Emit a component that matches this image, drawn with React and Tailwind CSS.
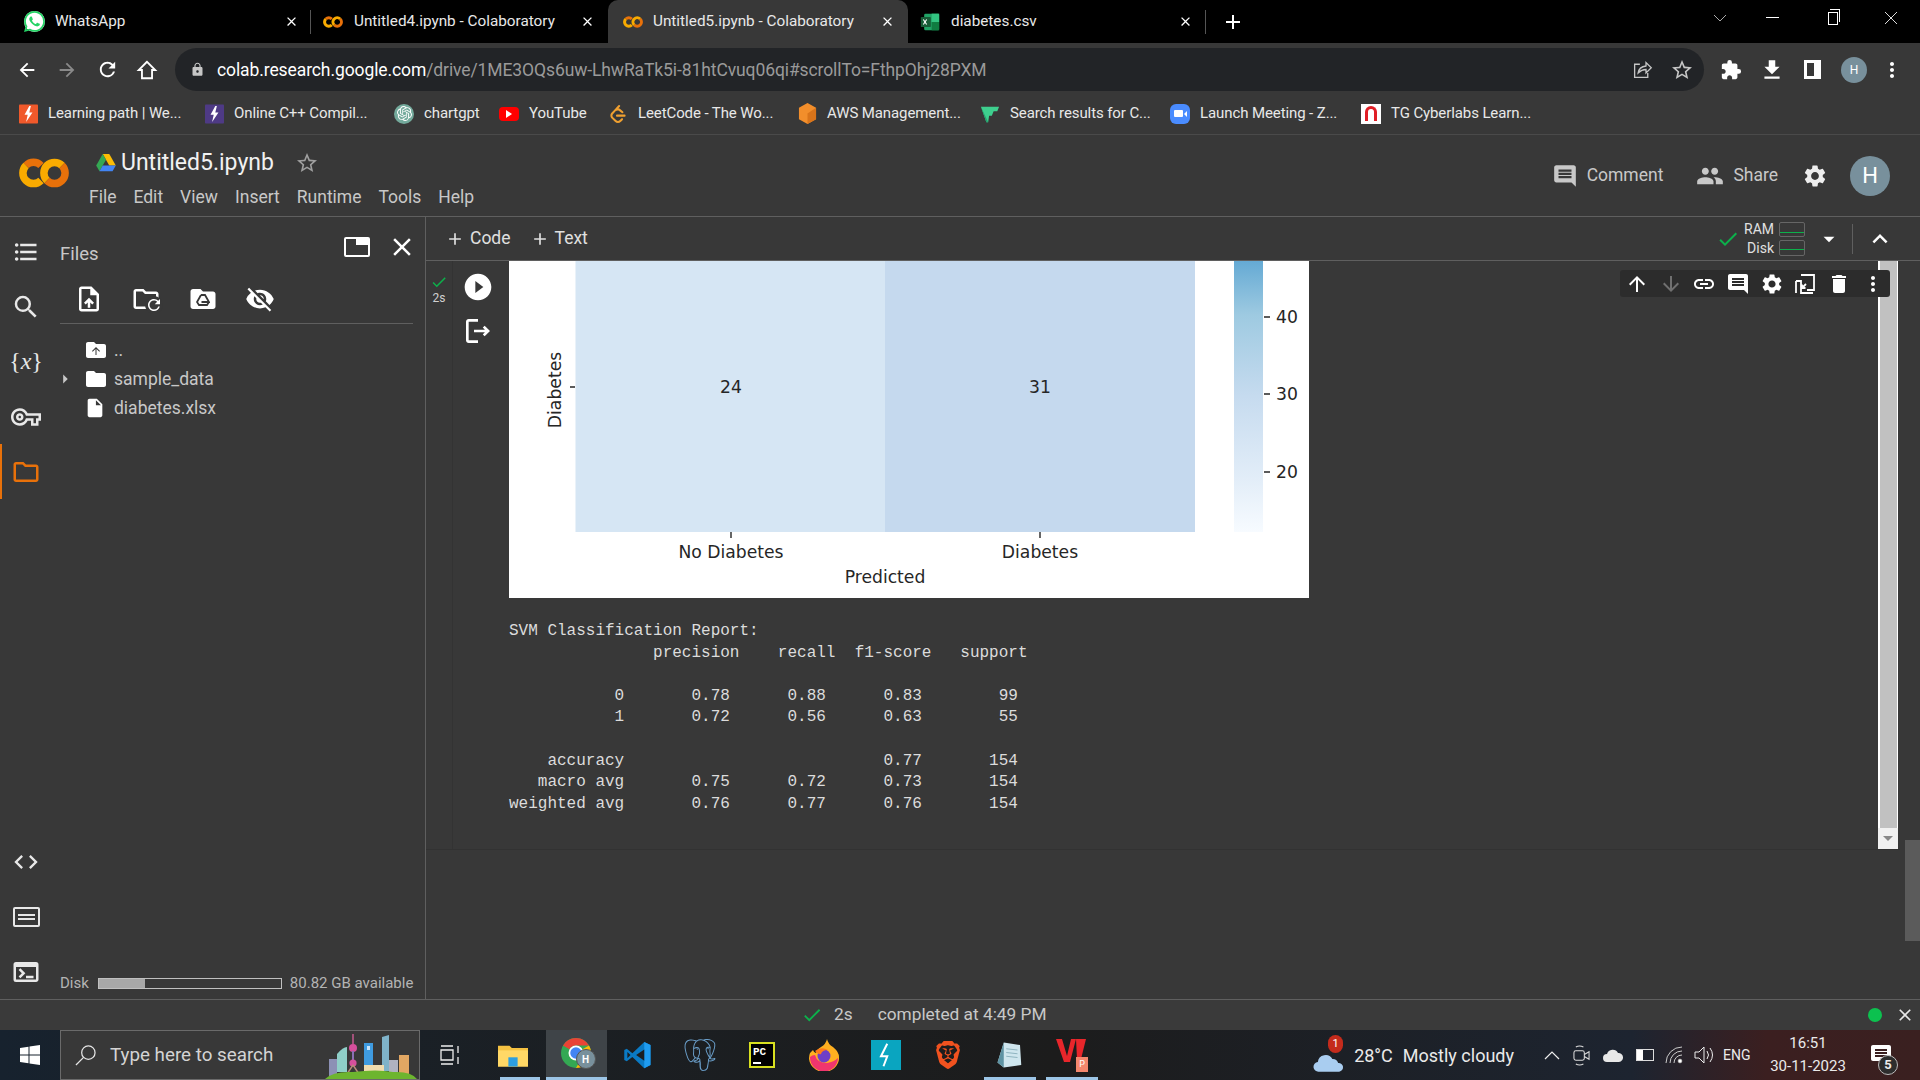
import {
    MdArrowBack, MdArrowForward, MdRefresh, MdLock, MdStarBorder, MdExtension, MdFileDownload,
    MdMoreVert, MdComment, MdPeople, MdSettings, MdCheck, MdArrowDropDown, MdKeyboardArrowUp, MdArrowUpward, MdArrowDownward,
    MdLink, MdDelete, MdFormatListBulleted, MdSearch, MdOutlineVpnKey, MdOutlineFolder, MdCode, MdTerminal, MdOutlineUploadFile,
    MdVisibilityOff, MdFolder, MdInsertDriveFile, MdArrowRight, MdClose, MdPlayCircleFilled, MdAdd, MdOutlineLogout,
} from "react-icons/md";
import { SiWhatsapp, SiOpenai, SiLeetcode, SiPostgresql, SiBrave } from "react-icons/si";

function ColabLogo({ className }) {
    return (
        <svg viewBox="0 0 50 30" className={className} fill="none" strokeWidth="7.5">
            <path d="M22 7.500A10.500 10.500 0 0 0 7 7.500" stroke="#e8710a" />
            <path d="M7 7.500A10.500 10.500 0 0 0 22 22.500" stroke="#f9ab00" />
            <path d="M28 22.500A10.500 10.500 0 0 1 43 7.500" stroke="#f9ab00" />
            <path d="M43 7.500A10.500 10.500 0 0 1 28 22.500" stroke="#e8710a" />
        </svg>
    );
}

function SquareBolt({ bg, className }) {
    return (
        <svg viewBox="0 0 24 24" className={className}>
            <rect width="24" height="24" rx="1" fill={bg} />
            <path d="M13 2 7 13h4l-2 9 8-12h-4l2-8z" fill="#fff" />
        </svg>
    );
}

function ExcelIcon() {
    return (
        <svg viewBox="0 0 24 24" className="w-5 h-5">
            <rect x="5" y="2" width="18" height="20" rx="1.5" fill="#21a366" />
            <rect x="14" y="2" width="9" height="10" fill="#33c481" />
            <rect x="14" y="12" width="9" height="10" fill="#107c41" />
            <rect x="1" y="6" width="12" height="12" rx="1" fill="#185c37" />
            <path d="m4 9 4 6m0-6-4 6" stroke="#fff" strokeWidth="1.4" />
        </svg>
    );
}

function WhatsAppIcon() {
    return (
        <div className="w-[21px] h-[21px] rounded-full bg-white">
            <SiWhatsapp className="w-[21px] h-[21px] text-[#25d366]" />
        </div>
    );
}

function DriveIcon() {
    return (
        <svg viewBox="0 0 24 22" className="w-[20px] h-[18px]">
            <path d="M8 0h8l8 14h-8z" fill="#fbbc04" />
            <path d="M8 0 0 14l4 7 8-14z" fill="#34a853" />
            <path d="M8 14h16l-4 7H4z" fill="#4285f4" />
        </svg>
    );
}

function ChromeIcon() {
    return (
        <div className="relative w-[32px] h-[38px]">
            <svg viewBox="0 0 24 24" className="w-[30px] h-[30px] mt-[2px]">
                <circle cx="12" cy="12" r="12" fill="#34a853" />
                <path d="M12 0a12 12 0 0 1 10.4 6H12a6 6 0 0 0-5.2 3L1.6 6A12 12 0 0 1 12 0z" fill="#ea4335" />
                <path d="M22.4 6A12 12 0 0 1 12 24l5.2-9A6 6 0 0 0 17.2 9z" fill="#fbbc04" />
                <circle cx="12" cy="12" r="6" fill="#fff" />
                <circle cx="12" cy="12" r="4.6" fill="#4285f4" />
            </svg>
            <div className="absolute left-[15px] top-[13px] w-[20px] h-[20px] rounded-full bg-[#78909c] border border-[#555] text-white text-[10px] font-bold flex items-center justify-center">H</div>
        </div>
    );
}

function VsCodeIcon() {
    return (
        <svg viewBox="0 0 24 24" className="w-[30px] h-[30px]">
            <path d="M17 1.500 7.500 10.500 3 7 1 8v8l2 1 4.500-3.500 9.500 9 5-2.500V4z" fill="#0a7ac4" />
            <path d="M17 1.500 22 4v16l-5 2.500z" fill="#1f9cf0" />
            <path d="M17 7.500 10.500 12l6.500 4.500zM3.500 9.500v5L6 12z" fill="#1b1e20" />
        </svg>
    );
}

function PyCharmIcon() {
    return (
        <div className="w-[26px] h-[26px] bg-black border-2 border-[#d8e020] [font-family:'Liberation_Mono',monospace] font-bold text-white text-[11px] leading-none pl-[2px] pt-[3px]">
            PC
            <div className="w-[8px] h-[2px] bg-white mt-[4px]" />
        </div>
    );
}

function FirefoxIcon() {
    return (
        <svg viewBox="0 0 30 32" className="w-[30px] h-[32px]">
            <path d="M18 0q1 5 6 8 6 5 6 10a15 14 0 1 1-29-4l3-3q1 3 3 3 1-4 5-6 5-3 6-8z" fill="#ffb020" />
            <path d="M1 18a14 14 0 0 0 28 1q-4 4-11 5-10 0-12-8-3 0-5 2z" fill="#f0356e" />
            <circle cx="15" cy="17" r="6.500" fill="#6e3fc8" />
            <path d="M6 12q6-5 13-1-6 0-7 4-3 1-6-3z" fill="#ff7a1a" />
        </svg>
    );
}

function BoltTile() {
    return (
        <svg viewBox="0 0 24 24" className="w-[30px] h-[30px]">
            <rect width="24" height="24" fill="#0aa5c0" />
            <path d="M13 3 8 13h5l-3 8" fill="none" stroke="#fff" strokeWidth="1.6" />
        </svg>
    );
}

function NotepadIcon() {
    return (
        <svg viewBox="0 0 24 24" className="w-[30px] h-[30px]">
            <path d="M7 2 20 4l1 16-14 2-5-4z" fill="#cfe6ee" />
            <path d="M7 2 2 18l5 4z" fill="#5e93a3" />
            <path d="M9 7l9 1M9 10l9 1M9 13l9 1" stroke="#8fb4c0" strokeWidth=".8" />
        </svg>
    );
}

function WpsIcon() {
    return (
        <div className="relative w-[32px] h-[34px]">
            <svg viewBox="0 0 30 26" className="w-[30px] h-[26px]">
                <path d="M0 1h6l5 17 4-17h5l-6 23H8zM20 1h10l-5 20h-4z" fill="#e8262b" />
            </svg>
            <div className="absolute right-0 bottom-0 w-[12px] h-[15px] bg-[#f4876d] text-white text-[9px] leading-[15px] text-center">P</div>
        </div>
    );
}

function WindowsLogo() {
    return (
        <svg viewBox="0 0 20 20" className="w-[20px] h-[20px]" fill="#fff">
            <path d="M0 3 8.500 1.800v7.800H0zM9.500 1.600 20 0v9.600H9.500zM0 10.500h8.500v7.800L0 17zM9.500 10.500H20V20L9.500 18.400z" />
        </svg>
    );
}

function Skyline() {
    return (
        <svg viewBox="0 0 94 47" className="w-[94px] h-[47px]">
            <rect x="4" y="27" width="8" height="17" fill="#8c90b5" />
            <path d="M12 40V22q6-7 10-7v25z" fill="#8fcfc8" />
            <path d="M28 2v10" stroke="#c45a8f" strokeWidth="1.5" />
            <circle cx="28" cy="16" r="4" fill="#d64f9c" />
            <rect x="27" y="19" width="2" height="9" fill="#8b6fb5" />
            <circle cx="28" cy="31" r="3.600" fill="#d64f9c" />
            <path d="M28 33l-6 9M28 33l6 9" stroke="#b98a7a" strokeWidth="1.400" />
            <rect x="39" y="11" width="9" height="26" fill="#3f9be0" />
            <rect x="42" y="14" width="3" height="4" fill="#cce6fa" />
            <path d="M57 5l7-2v36h-7z" fill="#7fb3c9" />
            <rect x="39" y="33" width="20" height="9" fill="#f0dcae" />
            <rect x="64" y="28" width="9" height="13" fill="#b0b2c0" />
            <rect x="74" y="23" width="10" height="19" fill="#e2a763" />
            <path d="M0 47q8-8 28-7 24-3 40 0 18-1 24 7z" fill="#6db52f" />
        </svg>
    );
}

function CloudBadge() {
    return (
        <div className="relative w-[32px] h-[36px]">
            <svg viewBox="0 0 32 22" className="absolute left-0 bottom-0 w-[31px] h-[22px]">
                <path d="M6 21a5 5 0 0 1-1-10 8 8 0 0 1 15-3 6 6 0 0 1 6 4 4.500 4.500 0 0 1 1 9z" fill="#a9cdf0" />
            </svg>
            <div className="absolute left-[15px] top-[-2px] w-[15px] h-[18px] rounded-full bg-[#c42b1c] text-white text-[11px] leading-[18px] text-center">1</div>
        </div>
    );
}

function TabItem({ icon, title, active, width, pad, gap, closeGap }) {
    return (
        <div className={`h-[43px] flex items-center shrink-0 ${active ? "bg-[#383838] rounded-t-[10px]" : ""}`} style={{ width, paddingLeft: pad }}>
            <div className="shrink-0" style={{ marginRight: gap }}>{icon}</div>
            <span className="text-[15.300px] text-[#e8e8e8] leading-[20px] mb-px flex-1 whitespace-nowrap">{title}</span>
            <MdClose className="w-[15px] h-[15px] text-white shrink-0" style={{ marginRight: closeGap }} />
        </div>
    );
}

function TabStrip() {
    return (
        <div className="h-[43px] bg-black flex items-center shrink-0">
            <TabItem icon={<WhatsAppIcon />} title="WhatsApp" width={310} pad={24} gap={10} closeGap={11} />
            <div className="w-px h-[24px] bg-[#555]" />
            <TabItem icon={<ColabLogo className="w-[20px] h-[12px] block" />} title="Untitled4.ipynb - Colaboratory" width={297} pad={12} gap={11} closeGap={13} />
            <TabItem icon={<ColabLogo className="w-[20px] h-[12px] block" />} title="Untitled5.ipynb - Colaboratory" width={300} active pad={15} gap={10} closeGap={13} />
            <TabItem icon={<ExcelIcon />} title="diabetes.csv" width={297} pad={12} gap={11} closeGap={12} />
            <div className="w-px h-[24px] bg-[#555]" />
            <MdAdd className="w-[24px] h-[24px] text-white ml-[15px]" />
            <div className="flex-1" />
            <svg viewBox="0 0 14 8" className="w-[14px] h-[8px] mb-[8px] mr-[39px]" fill="none" stroke="#aaa"><path d="m1 1 6 6 6-6" /></svg>
            <div className="w-[13px] h-px bg-white mb-[8px] mr-[49px]" />
            <div className="relative w-[10px] h-[13px] border border-white mb-[6px] mr-[46px]">
                <div className="absolute left-[1px] top-[-4px] w-[10px] h-[13px] border-t border-r border-white" />
            </div>
            <svg viewBox="0 0 14 14" className="w-[14px] h-[14px] mb-[8px] mr-[22px]" fill="none" stroke="#ddd"><path d="m1 1 12 12M13 1 1 13" /></svg>
        </div>
    );
}

function AddressBar() {
    return (
        <div className="h-[53px] pt-[5px] flex shrink-0 bg-[#383838]">
            <div className="w-[175px] h-[43px] flex items-center shrink-0">
                <MdArrowBack className="w-[22px] h-[22px] text-white ml-[16px]" />
                <MdArrowForward className="w-[22px] h-[22px] text-[#8a8a8a] ml-[18px]" />
                <MdRefresh className="w-[23px] h-[23px] text-white ml-[18px]" />
                <svg viewBox="0 0 24 24" className="w-[22px] h-[22px] ml-[17px]" fill="none" stroke="#fff" strokeWidth="2"><path d="M12 3 3 12h3.500v9h11v-9H21z" /></svg>
            </div>
            <div className="w-[1529px] h-[43px] rounded-full bg-[#222427] flex items-center">
                <MdLock className="w-[15px] h-[15px] text-[#c6c6c6] ml-[15px]" />
                <span className="ml-[12px] text-[17.500px] tracking-[-0.1px] leading-[24px] mt-px">
                    <span className="text-white">colab.research.google.com</span>
                    <span className="text-[#9a9a9a]">/drive/1ME3OQs6uw-LhwRaTk5i-81htCvuq06qi#scrollTo=FthpOhj28PXM</span>
                </span>
                <div className="flex-1" />
                <svg viewBox="0 0 24 24" className="w-[21px] h-[21px]" fill="none" stroke="#c6c6c6" strokeWidth="1.500"><path d="M9 6H3v15h15v-5M7 16q1-7 9-8V4l6 6-6 6v-4q-5 0-9 4z" /></svg>
                <MdStarBorder className="w-[24px] h-[24px] text-[#c6c6c6] ml-[17px] mr-[10px]" />
            </div>
            <div className="flex-1 h-[43px] flex items-center">
                <MdExtension className="w-[22px] h-[22px] text-white ml-[16px]" />
                <MdFileDownload className="w-[26px] h-[26px] text-white ml-[17px]" />
                <div className="w-[17px] h-[19px] border-[3px] border-white border-l-[7px] ml-[19px] bg-[#383838] rotate-180" />
                <div className="w-[26px] h-[26px] rounded-full bg-[#78909c] text-white text-[12px] flex items-center justify-center ml-[20px]">H</div>
                <MdMoreVert className="w-[24px] h-[24px] text-white ml-[13px]" />
            </div>
        </div>
    );
}

function BookmarkItem({ icon, label, width }) {
    return (
        <div className="flex items-center h-[24px] shrink-0" style={{ width }}>
            <div className="w-[20px] h-[20px] flex items-center justify-center shrink-0">{icon}</div>
            <span className="ml-[10px] text-[15px] text-[#e8e8e8] whitespace-nowrap tracking-[-0.1px]">{label}</span>
        </div>
    );
}

function Bookmarks() {
    return (
        <div className="h-[39px] pb-[3px] pl-[18px] flex items-center border-b border-[#4a4a4a] shrink-0 bg-[#383838]">
            <BookmarkItem width={186} icon={<SquareBolt bg="#f0592b" className="w-[19px] h-[20px]" />} label="Learning path | We..." />
            <BookmarkItem width={190} icon={<SquareBolt bg="#4e3a85" className="w-[19px] h-[20px]" />} label="Online C++ Compil..." />
            <BookmarkItem width={105} icon={<div className="w-[20px] h-[20px] rounded-full bg-[#74aa9c] flex items-center justify-center"><SiOpenai className="w-[15px] h-[15px] text-white" /></div>} label="chartgpt" />
            <BookmarkItem width={109} icon={<div className="w-[20px] h-[14px] rounded-[4px] bg-[#f00] flex items-center justify-center"><div className="border-l-[6px] border-l-white border-y-[4px] border-y-transparent" /></div>} label="YouTube" />
            <BookmarkItem width={189} icon={<SiLeetcode className="w-[18px] h-[20px] text-[#f0a030]" />} label="LeetCode - The Wo..." />
            <BookmarkItem width={183} icon={<svg viewBox="0 0 20 22" className="w-[19px] h-[21px]"><path d="M10 0 19 5v12l-9 5-9-5V5z" fill="#f28e2b" /><path d="M10 11 19 5v12l-9 5z" fill="#d9741a" /></svg>} label="AWS Management..." />
            <BookmarkItem width={190} icon={<svg viewBox="0 0 22 22" className="w-[22px] h-[22px]"><path d="M1 3h20l-2 5h-9l5 0-2 5h-3l-1 7H7z" fill="#3ecf8e" /><path d="M1 3l6 17h2z" fill="#24a06d" /></svg>} label="Search results for C..." />
            <BookmarkItem width={191} icon={<div className="w-[20px] h-[20px] rounded-[6px] bg-[#4a8cff] flex items-center justify-center"><div className="w-[9px] h-[7px] rounded-[1px] bg-white" /><div className="ml-px border-r-[3px] border-r-white border-y-[3px] border-y-transparent" /></div>} label="Launch Meeting - Z..." />
            <BookmarkItem width={170} icon={<div className="w-[20px] h-[20px] bg-white flex items-center justify-center"><div className="w-[12px] h-[15px] rounded-t-full border-[3px] border-b-0 border-[#e01e26]" /></div>} label="TG Cyberlabs Learn..." />
        </div>
    );
}

function ColabHeader() {
    return (
        <div className="h-[82px] flex border-b border-[#5f5f5f] shrink-0 bg-[#383838]">
            <div className="w-[89px] h-full flex items-start shrink-0 pt-[23px] pl-[19px]">
                <ColabLogo className="w-[50px] h-[30px]" />
            </div>
            <div className="flex flex-col pt-[14px]">
                <div className="flex items-center h-[28px] ml-[7px]">
                    <DriveIcon />
                    <span className="ml-[5px] text-[23px] text-[#f1f1f1] leading-[28px]">Untitled5.ipynb</span>
                    <MdStarBorder className="w-[24px] h-[24px] text-[#a0a0a0] ml-[21px]" />
                </div>
                <div className="flex gap-[17px] text-[17.500px] text-[#c8c8c8] mt-[8px] leading-[24px]">
                    <span>File</span><span>Edit</span><span>View</span><span>Insert</span><span>Runtime</span><span>Tools</span><span>Help</span>
                </div>
            </div>
            <div className="flex-1" />
            <div className="flex items-center h-[81px] pr-[30px] text-[17.500px] text-[#c8c8c8]">
                <MdComment className="w-[26px] h-[26px]" />
                <span className="ml-[9px]">Comment</span>
                <MdPeople className="w-[28px] h-[28px] ml-[33px]" />
                <span className="ml-[9px]">Share</span>
                <MdSettings className="w-[26px] h-[26px] text-[#eee] ml-[24px]" />
                <div className="w-[40px] h-[40px] rounded-full bg-[#78909c] text-white text-[22px] flex items-center justify-center ml-[22px]">H</div>
            </div>
        </div>
    );
}

function RailIcon({ children, active }) {
    return (
        <div className={`h-[55px] flex items-center justify-center w-[52px] ${active ? "border-l-2 border-[#e8710a] pr-[2px]" : ""}`}>
            {children}
        </div>
    );
}

function Rail() {
    const cls = "w-[28px] h-[28px] text-[#e8e8e8]";
    return (
        <div className="w-[52px] flex flex-col pt-[7px] shrink-0">
            <RailIcon><MdFormatListBulleted className={cls} /></RailIcon>
            <RailIcon><MdSearch className="w-[30px] h-[30px] text-[#e8e8e8]" /></RailIcon>
            <RailIcon><span className="[font-family:'Liberation_Serif',serif] text-[24px] text-[#e8e8e8] mb-[2px]">{"{"}<i>x</i>{"}"}</span></RailIcon>
            <RailIcon><MdOutlineVpnKey className="w-[30px] h-[30px] text-[#e8e8e8]" /></RailIcon>
            <RailIcon active><MdOutlineFolder className="w-[30px] h-[30px] text-[#e8710a]" /></RailIcon>
            <div className="flex-1" />
            <RailIcon><MdCode className={cls} /></RailIcon>
            <RailIcon>
                <div className="w-[27px] h-[20px] rounded-[2px] border-2 border-[#e8e8e8] flex flex-col justify-center gap-[2px] pl-[3px]">
                    <div className="w-[17px] h-[2px] bg-[#e8e8e8]" />
                    <div className="w-[17px] h-[2px] bg-[#e8e8e8]" />
                </div>
            </RailIcon>
            <RailIcon><MdTerminal className="w-[30px] h-[30px] text-[#e8e8e8]" /></RailIcon>
        </div>
    );
}

function ParentFolderIcon() {
    return (
        <div className="relative w-[24px] h-[24px]">
            <MdFolder className="w-[24px] h-[24px] text-white" />
            <MdArrowUpward className="absolute left-[6px] top-[7px] w-[12px] h-[12px] text-[#383838]" />
        </div>
    );
}

function RefreshFolderIcon() {
    return (
        <div className="relative w-[30px] h-[30px]">
            <MdOutlineFolder className="w-[30px] h-[30px] text-white" />
            <MdRefresh className="absolute right-[-2px] bottom-[0px] w-[18px] h-[18px] text-white bg-[#383838] rounded-full" />
        </div>
    );
}

function DriveFolderIcon() {
    return (
        <div className="relative w-[30px] h-[30px]">
            <MdFolder className="w-[30px] h-[30px] text-white" />
            <svg viewBox="0 0 14 12" className="absolute left-[8px] top-[10px] w-[14px] h-[12px]" fill="none" stroke="#383838" strokeWidth="1.800"><path d="M5 1h4l4 7H5.500M5 1 1 8l2 3h8l2-3" /></svg>
        </div>
    );
}

function FileRow({ arrow, icon, name }) {
    return (
        <div className="flex items-center h-[29px]">
            <div className="w-[22px] flex justify-start -ml-[1px]">{arrow && <MdArrowRight className="w-[22px] h-[22px] text-[#c8c8c8] -ml-[5px]" />}</div>
            <div className="w-[33px] flex items-center shrink-0 pl-[3px]">{icon}</div>
            <span className="text-[17.500px] text-[#c8c8c8] leading-[22px]">{name}</span>
        </div>
    );
}

function FilesPanel() {
    return (
        <div className="flex-1 flex flex-col pl-[8px] pr-[21px]">
            <div className="flex items-center h-[72px] shrink-0">
                <span className="text-[18.500px] text-[#c8c8c8] mt-[3px]">Files</span>
                <div className="flex-1" />
                <div className="relative w-[26px] h-[20px] rounded-[2px] border-[2.500px] border-white mb-[12px]">
                    <div className="absolute right-0 top-0 w-[12px] h-[6px] bg-white" />
                </div>
                <MdClose className="w-[30px] h-[30px] text-white ml-[17px] mb-[12px] -mr-[4px]" />
            </div>
            <div className="flex items-center h-[40px] -mt-[5px] border-b border-[#5f5f5f] pb-[10px] pl-[14px] gap-[27px] shrink-0">
                <MdOutlineUploadFile className="w-[30px] h-[30px] text-white" />
                <RefreshFolderIcon />
                <DriveFolderIcon />
                <MdVisibilityOff className="w-[30px] h-[30px] text-white" />
            </div>
            <div className="pt-[11px]">
                <FileRow icon={<ParentFolderIcon />} name=".." />
                <FileRow arrow icon={<MdFolder className="w-[24px] h-[24px] text-white" />} name="sample_data" />
                <FileRow icon={<MdInsertDriveFile className="w-[22px] h-[22px] text-white" />} name="diabetes.xlsx" />
            </div>
            <div className="flex-1" />
            <div className="flex items-center h-[22px] mb-[5px] text-[15px] text-[#b4b4b4]">
                <span>Disk</span>
                <div className="ml-[9px] w-[184px] h-[11px] border border-[#c0c0c0]">
                    <div className="w-[46px] h-full bg-[#a8a8a8]" />
                </div>
                <span className="ml-[8px] whitespace-nowrap">80.82 GB available</span>
            </div>
        </div>
    );
}

function CellToolbar() {
    return (
        <div className="absolute right-[10px] top-[9px] w-[270px] h-[27px] rounded-[3px] bg-[#2c2c2c] flex items-center pl-[5px] gap-[9.700px] text-white">
            <MdArrowUpward className="w-[24px] h-[24px]" />
            <MdArrowDownward className="w-[24px] h-[24px] text-[#707070]" />
            <MdLink className="w-[24px] h-[24px]" />
            <MdComment className="w-[24px] h-[24px]" />
            <MdSettings className="w-[24px] h-[24px]" />
            <svg viewBox="0 0 24 24" className="w-[24px] h-[24px]" fill="none" stroke="#fff" strokeWidth="1.800">
                <path d="M8 3h13v15H14M3 9h5v12h12M3 9v12M9 16l4-4M9 12.500V16h3.500" />
            </svg>
            <MdDelete className="w-[24px] h-[24px]" />
            <MdMoreVert className="w-[24px] h-[24px]" />
        </div>
    );
}

function HeatmapImage() {
    return (
        <svg viewBox="0 0 800 337" className="w-[800px] h-[337px] block" fontFamily="DejaVu Sans, sans-serif" fontSize="17.2" fill="#262626">
            <defs>
                <linearGradient id="cbar" x1="0" y1="0" x2="0" y2="1">
                    <stop offset="0" stopColor="#65aad4" />
                    <stop offset="0.2" stopColor="#9ecae1" />
                    <stop offset="0.5" stopColor="#c6dbef" />
                    <stop offset="0.8" stopColor="#e2edf8" />
                    <stop offset="1" stopColor="#f7fbff" />
                </linearGradient>
            </defs>
            <rect width="800" height="337" fill="#fff" />
            <rect x="66.500" width="310" height="271" fill="#d6e6f4" />
            <rect x="376" width="310" height="271" fill="#c5d9ee" />
            <rect x="725" width="29" height="271" fill="url(#cbar)" />
            <text x="222" y="132" textAnchor="middle">24</text>
            <text x="531" y="132" textAnchor="middle">31</text>
            <path d="M61 126h5M222 271v6M531 271v6M755 56h6M755 133h6M755 211h6" stroke="#262626" strokeWidth="1.400" />
            <text x="222" y="297" textAnchor="middle">No Diabetes</text>
            <text x="531" y="297" textAnchor="middle">Diabetes</text>
            <text x="376" y="322" textAnchor="middle">Predicted</text>
            <text transform="translate(52 129) rotate(-90)" textAnchor="middle">Diabetes</text>
            <text x="767" y="62">40</text>
            <text x="767" y="139">30</text>
            <text x="767" y="217">20</text>
        </svg>
    );
}

const report = `SVM Classification Report:
               precision    recall  f1-score   support

           0       0.78      0.88      0.83        99
           1       0.72      0.56      0.63        55

    accuracy                           0.77       154
   macro avg       0.75      0.72      0.73       154
weighted avg       0.76      0.77      0.76       154`;

function NotebookCell() {
    return (
        <div className="relative h-[589px] flex border-b border-[#323232] shrink-0 overflow-hidden">
            <div className="w-[27px] border-r border-[#333] flex flex-col items-center pt-[12px] shrink-0">
                <MdCheck className="w-[18px] h-[18px] text-[#0cb14b]" />
                <span className="text-[12px] text-[#d0d0d0] leading-[14px]">2s</span>
            </div>
            <div className="w-[49px] flex flex-col items-center pt-[10px] shrink-0">
                <MdPlayCircleFilled className="w-[32px] h-[32px] text-white" />
                <MdOutlineLogout className="w-[32px] h-[32px] text-white mt-[12px]" />
            </div>
            <div className="w-[1377px] pl-[7px] shrink-0">
                <HeatmapImage />
                <pre className="[font-family:'Liberation_Mono',monospace] text-[16px] leading-[21.600px] text-[#dcdcdc] mt-[23px]">{report}</pre>
            </div>
            <div className="w-[20px] bg-white flex flex-col shrink-0 ml-[-1px]">
                <div className="flex-1 bg-[#c1c1c1] ml-[2px] mr-px" />
                <div className="h-[21px] bg-[#f1f1f1] flex items-center justify-center">
                    <div className="border-t-[5px] border-t-[#888] border-x-[5px] border-x-transparent" />
                </div>
            </div>
            <CellToolbar />
        </div>
    );
}

function MainArea() {
    return (
        <div className="flex-1 flex min-h-0">
            <div className="w-[426px] flex border-r border-[#5f5f5f] shrink-0">
                <Rail />
                <FilesPanel />
            </div>
            <div className="flex-1 flex flex-col min-w-0">
                <div className="h-[44px] flex items-center border-b border-[#5f5f5f] shrink-0 text-[17.500px] text-[#e0e0e0]">
                    <MdAdd className="w-[20px] h-[20px] ml-[19px]" />
                    <span className="ml-[5px]">Code</span>
                    <MdAdd className="w-[20px] h-[20px] ml-[19px]" />
                    <span className="ml-[5px]">Text</span>
                    <div className="flex-1" />
                    <MdCheck className="w-[24px] h-[24px] text-[#0cb14b]" />
                    <div className="flex flex-col items-end text-[14px] leading-[19px] text-[#e0e0e0] ml-[4px]">
                        <div className="flex items-center"><span>RAM</span><div className="ml-[5px] w-[26px] h-[15px] border border-[#666] rounded-[2px] flex items-end"><div className="w-full h-[4px] border-t border-[#0cb14b]" /></div></div>
                        <div className="flex items-center"><span>Disk</span><div className="ml-[5px] w-[26px] h-[16px] border border-[#666] rounded-[2px] flex items-end"><div className="w-full h-[6px] border-t border-[#0cb14b]" /></div></div>
                    </div>
                    <MdArrowDropDown className="w-[26px] h-[26px] ml-[11px] text-white" />
                    <div className="w-px h-[30px] bg-[#5f5f5f] ml-[10px]" />
                    <MdKeyboardArrowUp className="w-[30px] h-[30px] text-white ml-[12px] mr-[25px]" />
                </div>
                <div className="flex-1 flex min-h-0">
                    <div className="flex-1 min-w-0"><NotebookCell /></div>
                    <div className="w-[15px] h-[101px] bg-[#5b5b5b] mt-[579px] ml-[5px] shrink-0" />
                </div>
            </div>
        </div>
    );
}

function StatusBar() {
    return (
        <div className="h-[31px] flex items-center border-t border-[#5f5f5f] shrink-0 text-[17.300px] text-[#c8c8c8] bg-[#3a3a3a]">
            <MdCheck className="w-[22px] h-[22px] text-[#0cb14b] ml-[801px]" />
            <span className="ml-[11px]">2s</span>
            <span className="ml-[25px]">completed at 4:49 PM</span>
            <div className="flex-1" />
            <div className="w-[14px] h-[14px] rounded-full bg-[#0cc14f]" />
            <MdClose className="w-[20px] h-[20px] text-[#e8e8e8] ml-[13px] mr-[5px]" />
        </div>
    );
}

function TaskIcon({ children, open }) {
    return (
        <div className="w-[62px] h-full flex items-center justify-center relative shrink-0">
            {children}
            {open && <div className="absolute left-[5px] right-[5px] bottom-0 h-[3px] bg-[#9cc5e6]" />}
        </div>
    );
}

function Taskbar() {
    return (
        <div className="h-[50px] flex items-stretch shrink-0 bg-[linear-gradient(90deg,#17222e_0%,#1b1f23_30%,#1c1c1c_55%,#1d2430_85%,#3b1f20_92%,#3a2020_100%)] text-white">
            <div className="w-[60px] flex items-center justify-center shrink-0"><WindowsLogo /></div>
            <div className="w-[360px] bg-[#383838] border border-[#6a6a6a] flex items-center shrink-0 overflow-hidden">
                <svg viewBox="0 0 22 22" className="w-[21px] h-[21px] ml-[14px]" fill="none" stroke="#e6e6e6" strokeWidth="1.300"><circle cx="14" cy="8" r="7" /><path d="M9 13 1 21" /></svg>
                <span className="ml-[14px] text-[18.800px] text-[#d4d4d4] leading-[24px]">Type here to search</span>
                <div className="flex-1" />
                <div className="self-end"><Skyline /></div>
            </div>
            <div className="w-[62px] flex items-center justify-center shrink-0">
                <svg viewBox="0 0 20 20" className="w-[20px] h-[20px] mr-[2px]" fill="none" stroke="#eee" strokeWidth="1.300"><path d="M1 1h12M1 19h12M1 5h12v10H1zM18 1v7M18 12v7" /></svg>
            </div>
            <div className="flex h-full w-[62px] items-center justify-center relative shrink-0">
                <svg viewBox="0 0 26 22" className="w-[30px] h-[26px]"><path d="M0 3h10l2 2h14v16H0z" fill="#f5c242" /><rect y="7" width="26" height="14" fill="#ffd866" /><rect x="9" y="13" width="8" height="8" fill="#2d9fe0" /></svg>
                <div className="absolute left-[18px] right-[4px] bottom-0 h-[3px] bg-[#9cc5e6]" />
            </div>
            <div className="w-[61px] relative flex items-center justify-center bg-[#3f4448] shrink-0 ml-[2px]">
                <ChromeIcon />
                <div className="absolute left-0 right-0 bottom-0 h-[3px] bg-[#9cc5e6]" />
            </div>
            <TaskIcon><VsCodeIcon /></TaskIcon>
            <TaskIcon><SiPostgresql className="w-[32px] h-[32px] text-[#6a9ec9]" /></TaskIcon>
            <TaskIcon><PyCharmIcon /></TaskIcon>
            <TaskIcon><FirefoxIcon /></TaskIcon>
            <TaskIcon><BoltTile /></TaskIcon>
            <TaskIcon><SiBrave className="w-[28px] h-[32px] text-[#f1521f]" /></TaskIcon>
            <TaskIcon open><NotepadIcon /></TaskIcon>
            <TaskIcon open><WpsIcon /></TaskIcon>
            <div className="flex-1" />
            <div className="flex items-center text-[#eaeaea]">
                <CloudBadge />
                <span className="ml-[9px] text-[18px] whitespace-nowrap">28°C</span>
                <span className="ml-[10px] text-[18px] whitespace-nowrap">Mostly cloudy</span>
                <svg viewBox="0 0 16 9" className="w-[16px] h-[9px] ml-[30px]" fill="none" stroke="#eee" strokeWidth="1.200"><path d="m1 8 7-7 7 7" /></svg>
                <svg viewBox="0 0 18 24" className="w-[17px] h-[23px] ml-[13px]" fill="none" stroke="#ddd" strokeWidth="1.100"><path d="M3 3q4-2 8 0M3 21q4 2 8 0" /><rect x="1" y="7" width="11" height="10" rx="2" /><path d="m12 11 5-3v8l-5-3" /></svg>
                <svg viewBox="0 0 20 13" className="w-[20px] h-[13px] ml-[13px]"><path d="M4 13a4 4 0 0 1 0-8 6 6 0 0 1 11-1 4.500 4.500 0 0 1 1 9z" fill="#e8e8e8" /></svg>
                <div className="w-[18px] h-[12px] border border-[#ddd] ml-[13px]"><div className="w-[6px] h-full bg-white" /></div>
                <svg viewBox="0 0 18 18" className="w-[18px] h-[18px] ml-[11px]" fill="none" stroke="#ccc"><path d="M1 17A16 16 0 0 1 17 1M5 17A12 12 0 0 1 17 5M9 17a8 8 0 0 1 8-8" /><circle cx="15" cy="15" r="1.800" fill="#fff" /></svg>
                <svg viewBox="0 0 20 20" className="w-[20px] h-[20px] ml-[10px]" fill="none" stroke="#eee"><path d="M2 7h4l5-5v16l-5-5H2zM14 6q3 4 0 8M17 3q5 7 0 14" /></svg>
                <span className="ml-[10px] text-[14px] w-[30px]">ENG</span>
                <div className="ml-[17px] w-[76px] flex flex-col items-center text-[15px] leading-[23px] whitespace-nowrap">
                    <span>16:51</span>
                    <span>30-11-2023</span>
                </div>
                <div className="relative ml-[23px] mr-[29px] w-[22px] h-[24px]">
                    <MdComment className="w-[24px] h-[24px] text-white" />
                    <div className="absolute left-[9px] top-[12px] w-[20px] h-[20px] rounded-full bg-[#2d2d2d] border border-[#bbb] text-[13px] font-bold flex items-center justify-center">5</div>
                </div>
            </div>
        </div>
    );
}

export default function App() {
    return (
        <div className="w-[1920px] h-[1080px] flex flex-col overflow-hidden bg-[#383838] [font-family:Roboto,sans-serif]">
            <TabStrip />
            <AddressBar />
            <Bookmarks />
            <ColabHeader />
            <MainArea />
            <StatusBar />
            <Taskbar />
        </div>
    );
}
